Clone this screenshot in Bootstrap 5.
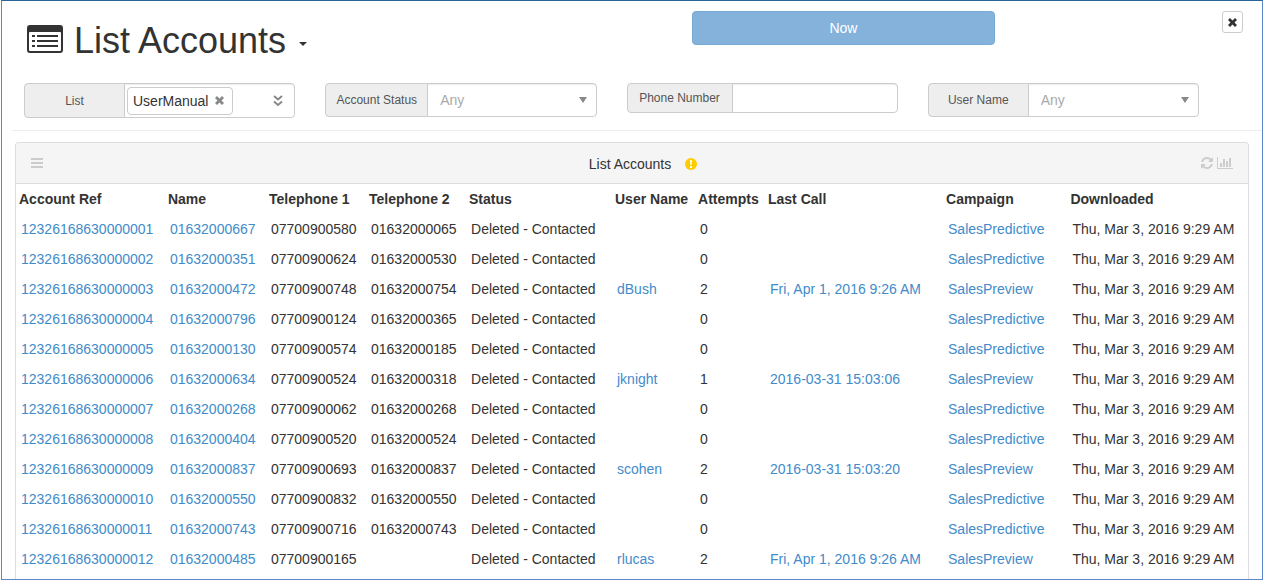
<!DOCTYPE html>
<html lang="en">
<head>
<meta charset="utf-8">
<meta name="viewport" content="width=device-width, initial-scale=1">
<title>List Accounts</title>
<link href="https://cdn.jsdelivr.net/npm/bootstrap@5.3.0/dist/css/bootstrap.min.css" rel="stylesheet">
<style>
  body { font-family: "Liberation Sans", Arial, sans-serif; font-size: 14px; line-height: 20px; color: #333; background: #fff; }
  a { color: #428bca; text-decoration: none; }
  a:hover { text-decoration: underline; }
  svg { display: block; fill: currentColor; flex: none; }
  .frame { margin: 0 15px 5px 1px; border: 1px solid #5b86cc; border-top-color: #2a6496; overflow: hidden; }

  .page-head { height: 82px; padding: 10px 19px 0 0; }
  .title-area { width: 55.6%; padding: 10px 0 0 25px; }
  .title-area h1 { font-size: 36px; line-height: 40px; font-weight: 400; margin: 0 0 0 11px; }
  .title-area .btn { color: inherit; padding: 17px 9px; }
  .now-area { width: 24.4%; }
  .btn-now { height: 34px; padding: 0; font-size: 14px; color: #fff; background: #84b2db; border: 1px solid #78aad6; border-radius: 4px; }
  .btn-close-page { width: 21px; height: 22px; padding: 0; color: #333; border: 1px solid #ccc; border-radius: 3px; }

  .filters { padding: 0 48px 12px 0; border-bottom: 1px solid #eee; margin-left: 10px; }
  .filters .row { --bs-gutter-x: 30px; margin: 0 0 0 -3px; }
  .filters .input-group { flex-wrap: nowrap; height: 34px; }
  .filters .input-group-text { width: 101px; padding: 0; justify-content: center; font-size: 12px; color: #555; background: #eee; border-color: #ccc; border-radius: 4px; }
  .filters .label-wide { width: 103px; }
  .filters .label-phone { width: 106px; }
  .filters .input-group-list { height: 35px; }
  .filters .input-group-phone { height: 30px; }
  .filters .form-control, .filters .form-select { font-size: 14px; line-height: 20px; padding: 0 12px; color: #333; border-color: #ccc; border-radius: 4px; box-shadow: inset 0 1px 1px rgba(0,0,0,.075); }
  .filters .form-select { color: #aaa; background: #fff url("data:image/svg+xml,%3Csvg xmlns='http://www.w3.org/2000/svg' viewBox='0 0 8 6'%3E%3Cpath d='M0 0h8L4 6z' fill='%23888'/%3E%3C/svg%3E") no-repeat right 9px center / 8px 6px; }
  .filters .token-box { padding: 0 11px 0 2px; }
  .token { height: 28px; padding: 0 8px 0 5px; gap: 7px; color: #333; background: #fff; border: 1px solid #ccc; border-radius: 4px; }
  .token button, .token-box > button { padding: 0; border: 0; background: none; color: #888; }
  .token-box input { width: 20px; border: 0; outline: 0; background: none; }

  .list-panel { margin: 11px 13px 0; border: 1px solid #ddd; border-bottom: 0; border-radius: 4px 4px 0 0; padding-bottom: 5px; }
  .panel-head { height: 41px; padding: 0 15px; background: #f5f5f5; border-bottom: 1px solid #ddd; border-radius: 3px 3px 0 0; }
  .panel-name { gap: 14px; padding: 1px 0 0 22px; }
  .notice { color: #fc0; }
  .tool { padding: 0; border: 0; background: none; color: #ccc; }
  .panel-side { width: 32px; }
  .accounts { table-layout: fixed; width: 100%; margin: 0; }
  .accounts th { height: 30px; padding: 0 0 0 3px; font-weight: 700; white-space: nowrap; }
  .accounts td { height: 30px; padding: 0 0 0 5px; white-space: nowrap; }
</style>
</head>
<body>
<main class="frame">
  <header class="page-head d-flex align-items-start">
    <div class="title-area d-flex align-items-start">
      <svg class="mt-1" width="36" height="28" viewBox="0 0 36 28" aria-hidden="true">
        <path fill-rule="evenodd" d="M3 0h30a3 3 0 0 1 3 3v22a3 3 0 0 1-3 3H3a3 3 0 0 1-3-3V3a3 3 0 0 1 3-3zM3 7a1 1 0 0 0-1 1v17a1 1 0 0 0 1 1h30a1 1 0 0 0 1-1V8a1 1 0 0 0-1-1z"/>
        <path d="M5 10h3v2H5zM10 10h21v2H10zM5 15h3v2H5zM10 15h21v2H10zM5 20h3v2H5zM10 20h21v2H10z"/>
      </svg>
      <h1>List Accounts</h1>
      <button class="btn border-0 ms-1 mt-1" type="button" aria-label="Title menu">
        <svg width="8" height="4" viewBox="0 0 8 4"><path d="M0 0h8L4 4z"/></svg>
      </button>
    </div>
    <div class="now-area"><button class="btn btn-now w-100" type="button">Now</button></div>
    <button class="btn btn-close-page ms-auto d-flex align-items-center justify-content-center" type="button" aria-label="Close">
      <svg width="9" height="9" viewBox="0 0 9 9"><path d="M2 0l2.500 2.500L7 0l2 2-2.500 2.500L9 7 7 9 4.500 6.500 2 9 0 7l2.500-2.500L0 2z"/></svg>
    </button>
  </header>

  <form class="filters">
    <div class="row">
      <div class="col-3">
        <div class="input-group input-group-list">
          <label class="input-group-text" for="list">List</label>
          <div class="form-control token-box d-flex align-items-center">
            <span class="token d-flex align-items-center">UserManual
              <button type="button" aria-label="Remove UserManual"><svg width="9" height="9" viewBox="0 0 9 9"><path d="M2 0l2.500 2.500L7 0l2 2-2.500 2.500L9 7 7 9 4.500 6.500 2 9 0 7l2.500-2.500L0 2z"/></svg></button>
            </span>
            <input id="list" type="text">
            <button class="ms-auto" type="button" aria-label="Show lists"><svg width="10" height="12" viewBox="0 0 10 12" stroke="currentColor" stroke-width="2"><path fill="none" d="M1 1l4 3.500L9 1M1 6.500L5 10l4-3.500"/></svg></button>
          </div>
        </div>
      </div>
      <div class="col-3">
        <div class="input-group">
          <label class="input-group-text label-wide" for="status">Account Status</label>
          <select class="form-select" id="status"><option>Any</option></select>
        </div>
      </div>
      <div class="col-3">
        <div class="input-group input-group-phone">
          <label class="input-group-text label-phone" for="phone">Phone Number</label>
          <input class="form-control" id="phone" type="tel">
        </div>
      </div>
      <div class="col-3">
        <div class="input-group">
          <label class="input-group-text" for="user">User Name</label>
          <select class="form-select" id="user"><option>Any</option></select>
        </div>
      </div>
    </div>
  </form>

  <section class="list-panel">
    <div class="panel-head d-flex align-items-center justify-content-between">
      <div class="panel-side">
        <button class="tool" type="button" aria-label="Menu"><svg width="12" height="10" viewBox="0 0 12 10"><path d="M0 0h12v2H0zM0 4h12v2H0zM0 8h12v2H0z"/></svg></button>
      </div>
      <div class="panel-name d-flex align-items-center">
        <span>List Accounts</span>
        <svg class="notice" width="12" height="12" viewBox="0 0 12 12" aria-hidden="true"><circle cx="6" cy="6" r="6"/><path fill="#fff" d="M5 2h2l-.300 5H5.300zM5 8h2v2H5z"/></svg>
      </div>
      <div class="panel-side d-flex align-items-center gap-1">
        <button class="tool" type="button" aria-label="Refresh"><svg width="12" height="12" viewBox="0 0 1536 1536"><path d="M1511 928q0 5-1 7-64 268-268 434.500T764 1536q-146 0-282.500-55T238 1324l-129 129q-19 19-45 19t-45-19-19-45V960q0-26 19-45t45-19h448q26 0 45 19t19 45-19 45l-137 137q71 66 161 102t187 36q134 0 250-65t186-179q11-17 53-117 8-23 30-23h192q13 0 22.500 9.500t9.500 22.500zm25-800v448q0 26-19 45t-45 19h-448q-26 0-45-19t-19-45 19-45l138-138q-148-137-349-137-134 0-250 65T332 500q-11 17-53 117-8 23-30 23H50q-13 0-22.500-9.500T18 608v-7q65-268 270-434.500T768 0q146 0 284 55.500T1297 212l130-129q19-19 45-19t45 19 19 45z"/></svg></button>
        <button class="tool" type="button" aria-label="Chart"><svg width="16" height="12" viewBox="0 0 16 12"><path d="M0 0h1v11h15v1H0zM3 6h2v4H3zM6 2h2v8H6zM9 4h2v6H9zM12 1h2v9h-2z"/></svg></button>
      </div>
    </div>
    <table class="accounts">
      <colgroup>
        <col style="width:12.09%"><col style="width:8.2%"><col style="width:8.12%"><col style="width:8.12%"><col style="width:11.85%"><col style="width:6.74%"><col style="width:5.68%"><col style="width:14.45%"><col style="width:10.1%"><col>
      </colgroup>
      <thead>
        <tr><th>Account Ref</th><th>Name</th><th>Telephone 1</th><th>Telephone 2</th><th>Status</th><th>User Name</th><th>Attempts</th><th>Last Call</th><th>Campaign</th><th>Downloaded</th></tr>
      </thead>
      <tbody>
        <tr><td><a href="#">12326168630000001</a></td><td><a href="#">01632000667</a></td><td>07700900580</td><td>01632000065</td><td>Deleted - Contacted</td><td></td><td>0</td><td></td><td><a href="#">SalesPredictive</a></td><td>Thu, Mar 3, 2016 9:29 AM</td></tr>
        <tr><td><a href="#">12326168630000002</a></td><td><a href="#">01632000351</a></td><td>07700900624</td><td>01632000530</td><td>Deleted - Contacted</td><td></td><td>0</td><td></td><td><a href="#">SalesPredictive</a></td><td>Thu, Mar 3, 2016 9:29 AM</td></tr>
        <tr><td><a href="#">12326168630000003</a></td><td><a href="#">01632000472</a></td><td>07700900748</td><td>01632000754</td><td>Deleted - Contacted</td><td><a href="#">dBush</a></td><td>2</td><td><a href="#">Fri, Apr 1, 2016 9:26 AM</a></td><td><a href="#">SalesPreview</a></td><td>Thu, Mar 3, 2016 9:29 AM</td></tr>
        <tr><td><a href="#">12326168630000004</a></td><td><a href="#">01632000796</a></td><td>07700900124</td><td>01632000365</td><td>Deleted - Contacted</td><td></td><td>0</td><td></td><td><a href="#">SalesPredictive</a></td><td>Thu, Mar 3, 2016 9:29 AM</td></tr>
        <tr><td><a href="#">12326168630000005</a></td><td><a href="#">01632000130</a></td><td>07700900574</td><td>01632000185</td><td>Deleted - Contacted</td><td></td><td>0</td><td></td><td><a href="#">SalesPredictive</a></td><td>Thu, Mar 3, 2016 9:29 AM</td></tr>
        <tr><td><a href="#">12326168630000006</a></td><td><a href="#">01632000634</a></td><td>07700900524</td><td>01632000318</td><td>Deleted - Contacted</td><td><a href="#">jknight</a></td><td>1</td><td><a href="#">2016-03-31 15:03:06</a></td><td><a href="#">SalesPreview</a></td><td>Thu, Mar 3, 2016 9:29 AM</td></tr>
        <tr><td><a href="#">12326168630000007</a></td><td><a href="#">01632000268</a></td><td>07700900062</td><td>01632000268</td><td>Deleted - Contacted</td><td></td><td>0</td><td></td><td><a href="#">SalesPredictive</a></td><td>Thu, Mar 3, 2016 9:29 AM</td></tr>
        <tr><td><a href="#">12326168630000008</a></td><td><a href="#">01632000404</a></td><td>07700900520</td><td>01632000524</td><td>Deleted - Contacted</td><td></td><td>0</td><td></td><td><a href="#">SalesPredictive</a></td><td>Thu, Mar 3, 2016 9:29 AM</td></tr>
        <tr><td><a href="#">12326168630000009</a></td><td><a href="#">01632000837</a></td><td>07700900693</td><td>01632000837</td><td>Deleted - Contacted</td><td><a href="#">scohen</a></td><td>2</td><td><a href="#">2016-03-31 15:03:20</a></td><td><a href="#">SalesPreview</a></td><td>Thu, Mar 3, 2016 9:29 AM</td></tr>
        <tr><td><a href="#">12326168630000010</a></td><td><a href="#">01632000550</a></td><td>07700900832</td><td>01632000550</td><td>Deleted - Contacted</td><td></td><td>0</td><td></td><td><a href="#">SalesPredictive</a></td><td>Thu, Mar 3, 2016 9:29 AM</td></tr>
        <tr><td><a href="#">12326168630000011</a></td><td><a href="#">01632000743</a></td><td>07700900716</td><td>01632000743</td><td>Deleted - Contacted</td><td></td><td>0</td><td></td><td><a href="#">SalesPredictive</a></td><td>Thu, Mar 3, 2016 9:29 AM</td></tr>
        <tr><td><a href="#">12326168630000012</a></td><td><a href="#">01632000485</a></td><td>07700900165</td><td></td><td>Deleted - Contacted</td><td><a href="#">rlucas</a></td><td>2</td><td><a href="#">Fri, Apr 1, 2016 9:26 AM</a></td><td><a href="#">SalesPreview</a></td><td>Thu, Mar 3, 2016 9:29 AM</td></tr>
      </tbody>
    </table>
  </section>
</main>
<script src="https://cdn.jsdelivr.net/npm/bootstrap@5.3.0/dist/js/bootstrap.bundle.min.js"></script>
</body>
</html>
